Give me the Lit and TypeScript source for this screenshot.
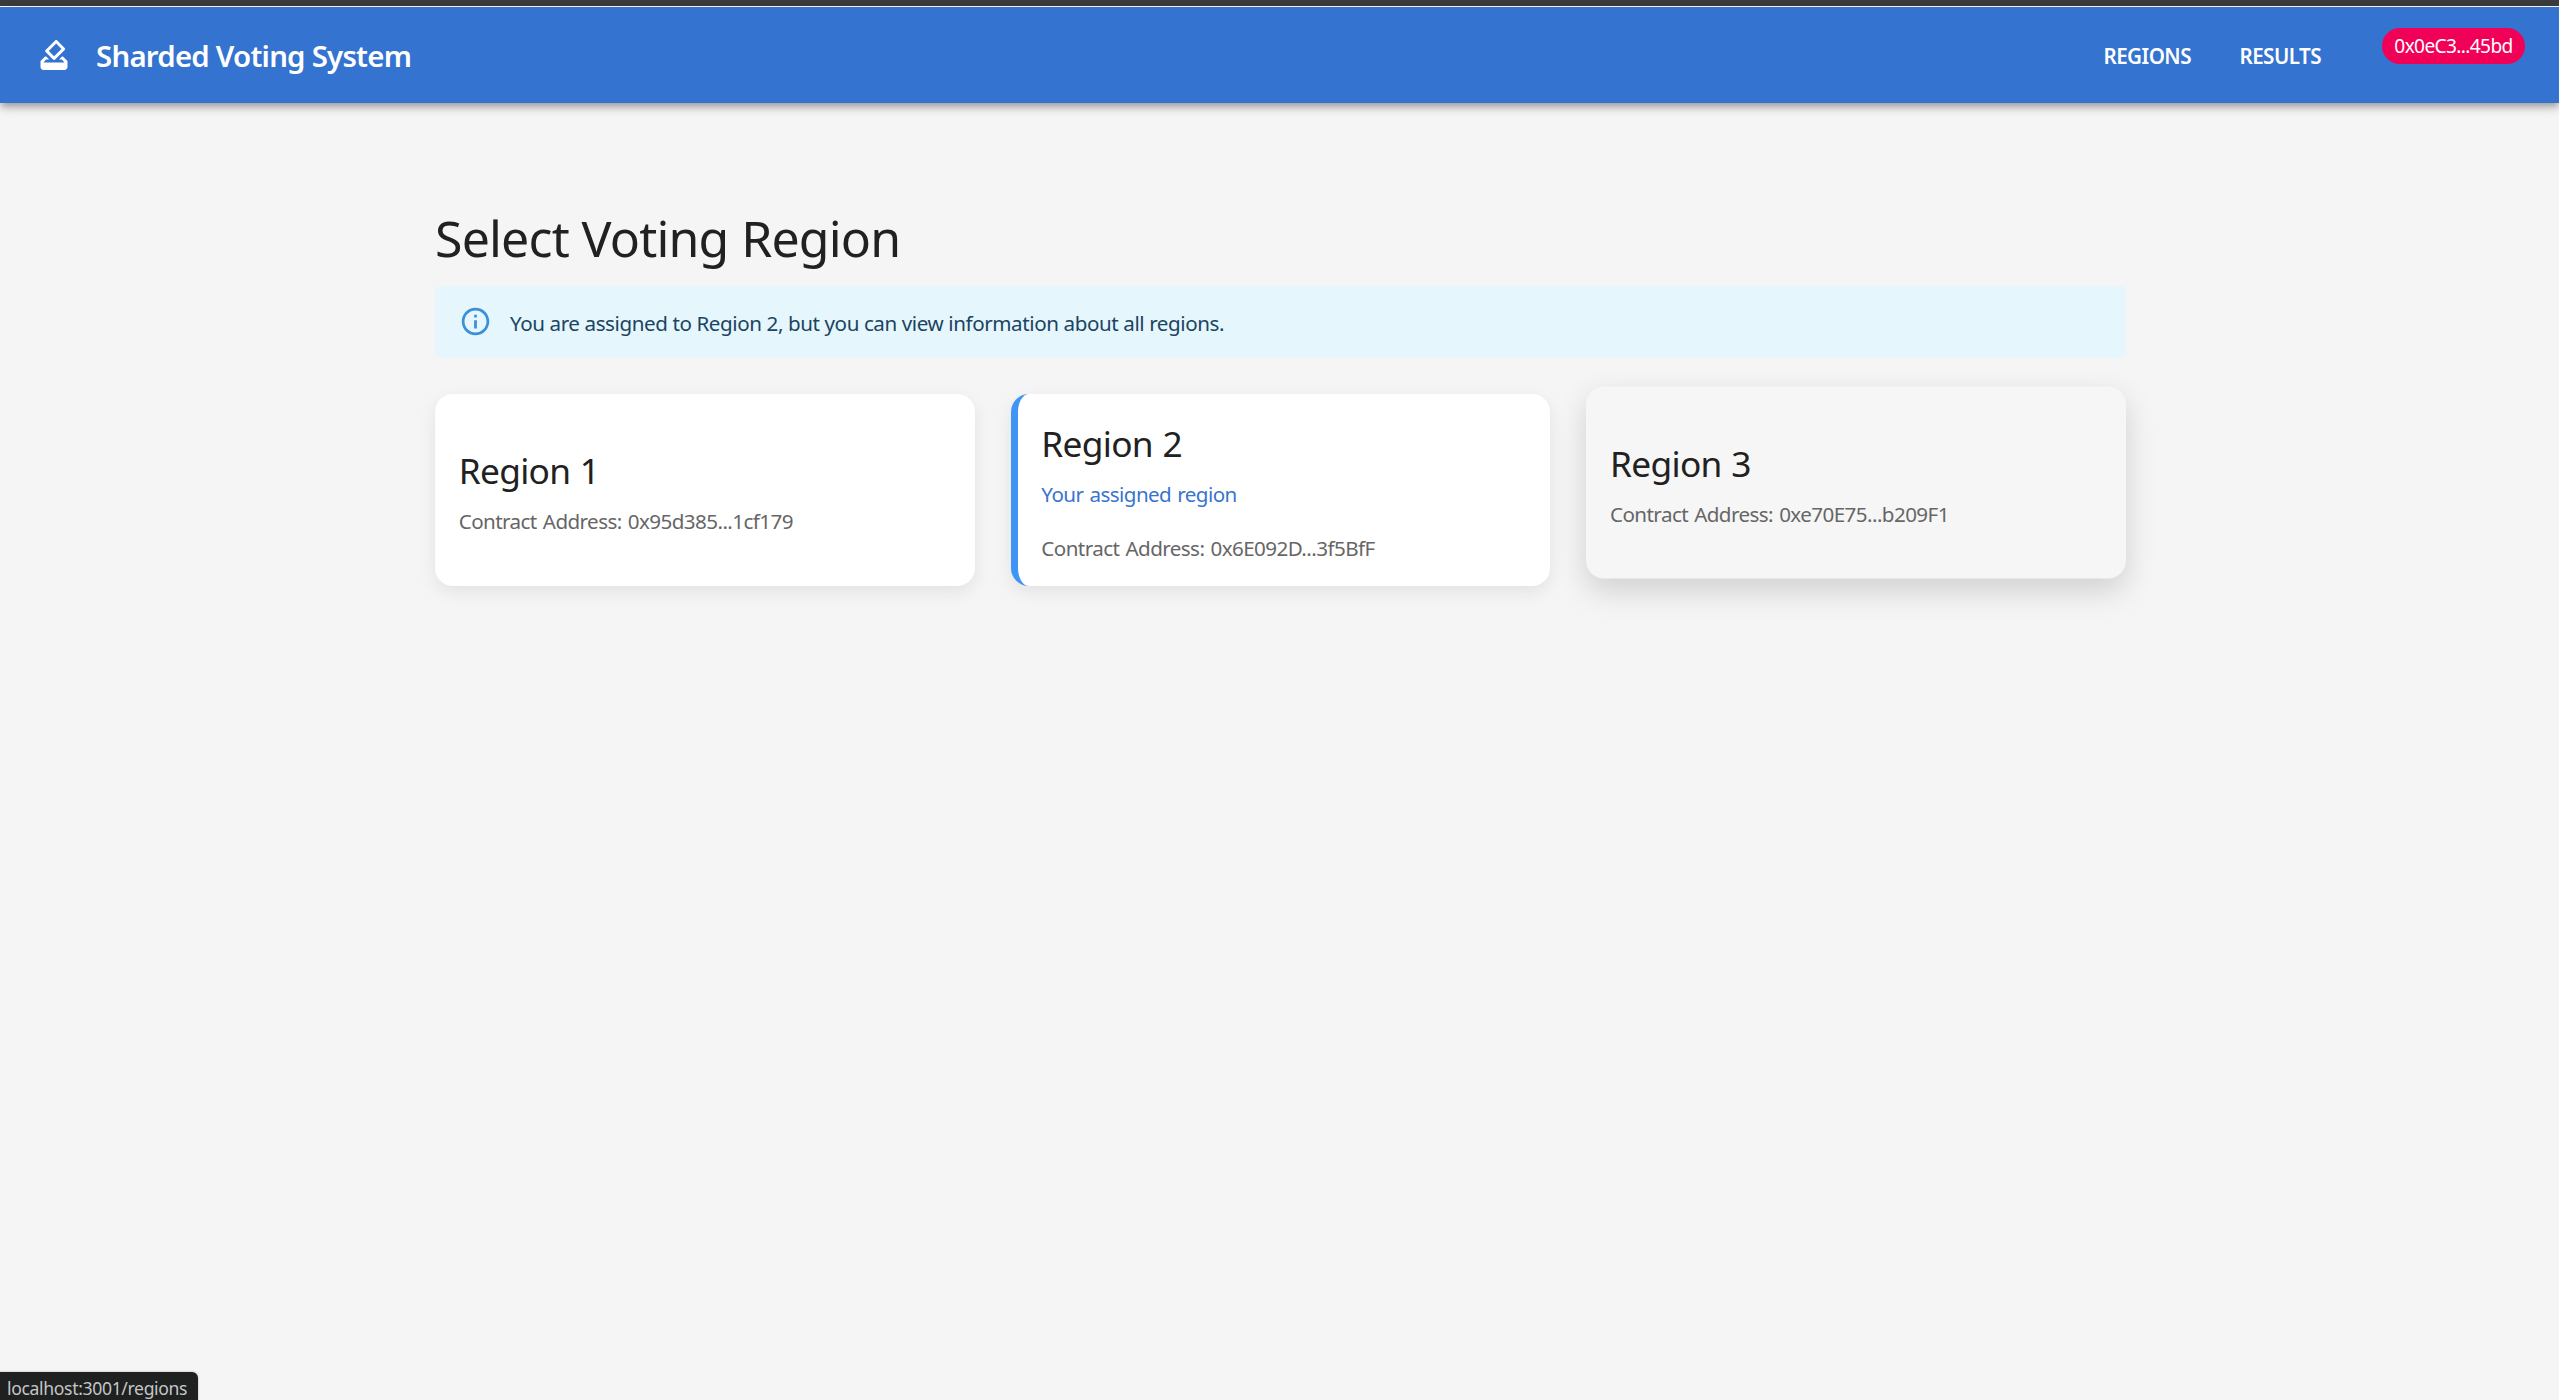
import { LitElement, html, css, nothing } from "lit";
import { customElement, property } from "lit/decorators.js";

interface Region {
  name: string;
  address: string;
  assigned?: boolean;
  raised?: boolean;
}

const REGIONS: Region[] = [
  { name: "Region 1", address: "0x95d385...1cf179" },
  { name: "Region 2", address: "0x6E092D...3f5BfF", assigned: true },
  { name: "Region 3", address: "0xe70E75...b209F1", raised: true },
];

@customElement("region-card")
class RegionCard extends LitElement {
  @property({ attribute: false }) region!: Region;

  static styles = css`
    :host {
      display: block;
    }
    .card {
      box-sizing: border-box;
      height: 192px;
      padding: 2px 23px 0 23.7px;
      display: flex;
      flex-direction: column;
      justify-content: center;
      border-radius: 18px;
      background: #fff;
      box-shadow: 0 6px 18px rgba(0, 0, 0, 0.08);
    }
    .assigned {
      border-left: 7px solid #4094f3;
    }
    .raised {
      background: #f6f6f6;
      box-shadow: 0 12px 30px rgba(0, 0, 0, 0.15);
      transform: translateY(-7.5px);
    }
    .name {
      font-size: 35.3px;
      line-height: 48px;
      letter-spacing: -0.7px;
      word-spacing: 1px;
      color: #212121;
      margin-bottom: 12px;
    }
    .line {
      font-size: 20.6px;
      line-height: 30px;
      letter-spacing: -0.57px;
      word-spacing: 1.3px;
      color: #666;
    }
    .own {
      color: #3874cf;
      margin-bottom: 24px;
    }
  `;

  render() {
    const { name, address, assigned, raised } = this.region;
    return html`
      <div class="card ${assigned ? "assigned" : ""} ${raised ? "raised" : ""}">
        <div class="name">${name}</div>
        ${assigned ? html`<div class="line own">Your assigned region</div>` : nothing}
        <div class="line">Contract Address: ${address}</div>
      </div>
    `;
  }
}

@customElement("app-root")
class AppRoot extends LitElement {
  static styles = css`
    :host {
      display: block;
      height: 1400px;
      overflow: hidden;
      position: relative;
      background: #f5f5f5;
      font-family: "Noto Sans", "Open Sans", sans-serif;
    }
    .frame {
      height: 6px;
      background: #3b3b3b;
      border-bottom: 1px solid #fff;
    }
    .bar {
      box-sizing: border-box;
      height: 96px;
      padding: 0 34px 0 36px;
      display: flex;
      align-items: center;
      color: #fff;
      background: #3473d0;
      box-shadow: 0 3px 6px -1.5px rgba(0, 0, 0, 0.2), 0 6px 7.5px rgba(0, 0, 0, 0.14),
        0 1.5px 15px rgba(0, 0, 0, 0.12);
    }
    .logo {
      width: 36px;
      height: 36px;
      fill: currentColor;
    }
    .brand {
      flex: 1;
      margin-left: 24px;
      padding-top: 2px;
      font-size: 29.4px;
      font-weight: 600;
      line-height: 48px;
      letter-spacing: -0.76px;
    }
    .link {
      padding-top: 1px;
      font-size: 20.6px;
      font-weight: 600;
      line-height: 36px;
      letter-spacing: -0.52px;
      width: 136px;
    }
    .link.last {
      width: 142.6px;
    }
    .chip {
      box-sizing: border-box;
      align-self: flex-start;
      margin-top: 21px;
      width: 143px;
      height: 36px;
      border-radius: 18px;
      text-align: center;
      font-size: 19.1px;
      line-height: 36px;
      letter-spacing: -0.62px;
      background: #f10057;
    }
    .page {
      width: 1691px;
      margin-left: 435px;
      padding-top: 104px;
    }
    .title {
      margin: 0 0 16px;
      font-size: 50px;
      font-weight: 400;
      line-height: 63px;
      letter-spacing: -0.82px;
      word-spacing: 0.5px;
      color: #212121;
    }
    .notice {
      box-sizing: border-box;
      height: 72px;
      padding: 0 24px;
      display: flex;
      align-items: center;
      gap: 18px;
      border-radius: 6px;
      background: #e5f6fd;
      color: #1b4461;
      font-size: 20.6px;
      line-height: 30px;
      letter-spacing: -0.41px;
    }
    .notice span {
      padding-top: 2px;
    }
    .info {
      width: 33px;
      height: 33px;
      margin-bottom: 1.5px;
      fill: #3c8fd9;
    }
    .grid {
      display: grid;
      grid-template-columns: repeat(3, 1fr);
      gap: 36px;
      margin-top: 36px;
    }
    .status {
      position: absolute;
      left: 0;
      bottom: 0;
      box-sizing: border-box;
      width: 198px;
      height: 28px;
      padding: 2px 0 0 7px;
      border-top-right-radius: 6px;
      background: #1f2020;
      color: #c4c7c8;
      font-size: 17.6px;
      line-height: 28px;
      letter-spacing: -0.355px;
      white-space: nowrap;
      box-shadow: 0 0 2px rgba(0, 0, 0, 0.35);
    }
  `;

  render() {
    return html`
      <div class="frame"></div>
      <header class="bar">
        <svg class="logo" viewBox="0 0 24 24">
          <path
            d="M18 13h-.68l-2 2h1.91L19 17H5l1.78-2h2.05l-2-2H6l-3 3v4c0 1.1.89 2 1.99 2H19c1.1 0 2-.89 2-2v-4l-3-3zm-1-5.05-4.95 4.95-3.54-3.54 4.95-4.95L17 7.95zm-4.24-5.66L6.39 8.66c-.39.39-.39 1.02 0 1.41l4.95 4.95c.39.39 1.02.39 1.41 0l6.36-6.36c.39-.39.39-1.02 0-1.41L14.16 2.3c-.38-.4-1.01-.4-1.4-.01z"
          />
        </svg>
        <div class="brand">Sharded Voting System</div>
        <div class="link">REGIONS</div>
        <div class="link last">RESULTS</div>
        <div class="chip">0x0eC3...45bd</div>
      </header>
      <main class="page">
        <h1 class="title">Select Voting Region</h1>
        <div class="notice">
          <svg class="info" viewBox="0 0 24 24">
            <path
              d="M11 7h2v2h-2zm0 4h2v6h-2zm1-9C6.48 2 2 6.48 2 12s4.48 10 10 10 10-4.48 10-10S17.52 2 12 2zm0 18c-4.41 0-8-3.59-8-8s3.59-8 8-8 8 3.59 8 8-3.59 8-8 8z"
            />
          </svg>
          <span>You are assigned to Region 2, but you can view information about all regions.</span>
        </div>
        <div class="grid">
          ${REGIONS.map((r) => html`<region-card .region=${r}></region-card>`)}
        </div>
      </main>
      <div class="status">localhost:3001/regions</div>
    `;
  }
}
